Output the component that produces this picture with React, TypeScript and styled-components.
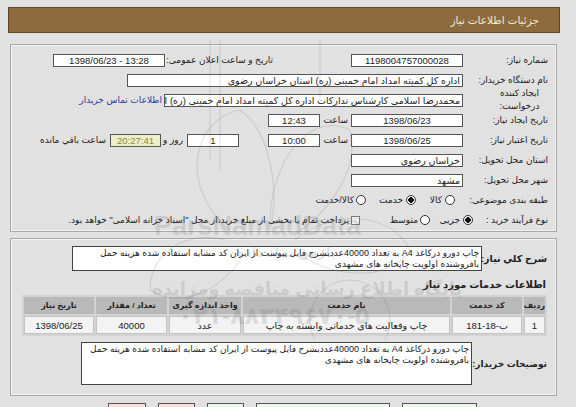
import styled, { createGlobalStyle } from "styled-components";

const GlobalStyle = createGlobalStyle`
  html, body {
    margin: 0;
    padding: 0;
    background: #e1e1e1;
  }
  body {
    font-family: "Liberation Sans", "DejaVu Sans", sans-serif;
    font-size: 9px;
    color: #222;
    overflow: hidden;
  }
`;

const Page = styled.div`
  position: relative;
  direction: rtl;
  width: 576px;
  height: 407px;
  padding: 7px 16px 0 8px;
  box-sizing: border-box;
  overflow: hidden;
`;

const TitleBar = styled.div`
  height: 26px;
  background: #8c6c3e;
  border: 1px solid #5b4628;
  box-sizing: border-box;
  display: flex;
  align-items: center;
  padding-right: 20px;
  color: #f3ead6;
  font-size: 10.5px;
`;

const Panel = styled.div<{ $mt: number; $pad: string }>`
  margin: ${(p) => p.$mt}px 3px 0 2px;
  border: 1px solid #a8a8a8;
  box-shadow: inset 0 0 0 1px #f2f2f2;
  padding: ${(p) => p.$pad};
`;

const FormRow = styled.div`
  display: flex;
  align-items: center;
  height: 20px;
  white-space: nowrap;
`;

const Label = styled.div<{ $w?: number; $stack?: boolean }>`
  flex: none;
  width: ${(p) => p.$w ?? 85}px;
  line-height: 13px;
  white-space: nowrap;
  ${(p) =>
    p.$stack &&
    "padding: 0 5px 0 33px; box-sizing: border-box; text-align: center;"}
`;

const Text = styled.span<{ $ms?: number; $w?: number }>`
  flex: none;
  margin-inline-start: ${(p) => p.$ms ?? 0}px;
  ${(p) => (p.$w ? `width: ${p.$w}px;` : "")}
  white-space: nowrap;
`;

const Field = styled.div<{
  $w: number;
  $ms?: number;
  $align?: "center" | "right";
  $warn?: boolean;
  $ltr?: boolean;
}>`
  flex: none;
  width: ${(p) => p.$w}px;
  height: 13px;
  box-sizing: border-box;
  margin-inline-start: ${(p) => p.$ms ?? 0}px;
  border: 1px solid #555;
  background: ${(p) => (p.$warn ? "#eeeec8" : "#fff")};
  color: ${(p) => (p.$warn ? "#8f8a43" : "#222")};
  direction: ${(p) => (p.$ltr ? "ltr" : "rtl")};
  text-align: ${(p) => p.$align ?? "center"};
  font-size: 9.5px;
  line-height: 11px;
  padding: 0 2px;
  overflow: hidden;
  white-space: nowrap;
`;

const BuyerLink = styled.a`
  margin-inline-start: 2px;
  color: #2c3c9c;
  text-decoration: none;
`;

const Radio = styled.span<{ $ms?: number; $on?: boolean }>`
  flex: none;
  width: 10px;
  height: 10px;
  box-sizing: border-box;
  margin-inline-start: ${(p) => p.$ms ?? 0}px;
  border-radius: 50%;
  border: 1px solid #333;
  background: ${(p) =>
    p.$on ? "radial-gradient(circle, #111 0 2.6px, #fff 3px)" : "#fff"};
`;

const Check = styled.span<{ $ms?: number }>`
  flex: none;
  width: 9px;
  height: 9px;
  box-sizing: border-box;
  margin-inline-start: ${(p) => p.$ms ?? 0}px;
  border: 1px solid #777;
  background: #f7f7f7;
`;

const DescRow = styled.div<{ $mt?: number }>`
  display: flex;
  align-items: center;
  margin-top: ${(p) => p.$mt ?? 0}px;
`;

const BoldLabel = styled.div<{ $size?: number }>`
  flex: 1;
  min-width: 0;
  font-weight: bold;
  font-size: ${(p) => p.$size ?? 9}px;
  white-space: nowrap;
`;

const DescBox = styled.div<{ $w: number; $h: number; $ml?: number }>`
  flex: none;
  width: ${(p) => p.$w}px;
  height: ${(p) => p.$h}px;
  margin-left: ${(p) => p.$ml ?? 0}px;
  box-sizing: border-box;
  background: #fff;
  border: 1px solid #444;
  padding: 1px 2px;
  line-height: 11px;
  overflow: hidden;
`;

const SectionTitle = styled.div`
  margin-top: 8px;
  padding-right: 1px;
  font-weight: bold;
  font-size: 10px;
  line-height: 12px;
`;

const Grid = styled.table`
  width: 100%;
  margin-top: 4px;
  border-collapse: separate;
  border-spacing: 2px;
  background: #d3d3d3;
  table-layout: fixed;
`;

const HeadCell = styled.th<{ $w?: number }>`
  ${(p) => (p.$w ? `width: ${p.$w}px;` : "")}
  height: 17px;
  padding: 0;
  background: #b9b9b9;
  font-weight: bold;
  font-size: 8px;
  color: #222;
  text-align: center;
  white-space: nowrap;
  overflow: hidden;
`;

const Cell = styled.td`
  height: 16px;
  padding: 0;
  background: #f3f3f3;
  border: 1px solid #c4c4c4;
  text-align: center;
  font-size: 9.5px;
  white-space: nowrap;
`;

const ButtonBar = styled.div`
  display: flex;
  gap: 12px;
  margin-top: 7px;
  padding-right: 83px;
`;

const Btn = styled.div<{ $w: number; $tone: "green" | "pink" }>`
  width: ${(p) => p.$w}px;
  height: 22px;
  box-sizing: border-box;
  border: 1px solid #555;
  background: ${(p) => (p.$tone === "pink" ? "#f7dcdc" : "#eaf6ea")};
`;

const Watermark = styled.div`
  position: absolute;
  inset: 0;
  pointer-events: none;
`;

const MarkSvg = styled.svg`
  position: absolute;
  left: 120px;
  top: 40px;
`;

const MarkWord = styled.div<{ $top: number; $left: number; $size: number }>`
  position: absolute;
  top: ${(p) => p.$top}px;
  left: ${(p) => p.$left}px;
  font-size: ${(p) => p.$size}px;
  font-weight: bold;
  color: rgba(110, 110, 110, 0.2);
  white-space: nowrap;
  direction: ltr;
`;

const descText =
  "چاپ دورو درکاغذ A4 به تعداد 40000عددبشرح فایل پیوست از ایران کد مشابه استفاده شده هزینه حمل بافروشنده اولویت چاپخانه های مشهدی";

export default function App() {
  return (
    <>
      <GlobalStyle />
      <Page>
        <TitleBar>جزئیات اطلاعات نیاز</TitleBar>

        <Panel $mt={11} $pad="5px 8px 1px 8px">
          <FormRow>
            <Label>شماره نیاز:</Label>
            <Field $w={112}>1198004757000028</Field>
            <Text $ms={78} $w={108}>
              تاریخ و ساعت اعلان عمومی:
            </Text>
            <Field $w={112} $ms={4} $ltr>
              1398/06/23 - 13:28
            </Field>
          </FormRow>
          <FormRow>
            <Label>نام دستگاه خریدار:</Label>
            <Field $w={336} $align="right">
              اداره کل کمیته امداد امام خمینی (ره) استان خراسان رضوی
            </Field>
          </FormRow>
          <FormRow>
            <Label $stack>
              ایجاد کننده
              <br />
              درخواست:
            </Label>
            <Field $w={299} $align="right">
              محمدرضا اسلامی کارشناس تدارکات اداره کل کمیته امداد امام خمینی
              (ره) استان خراسان رضوی
            </Field>
            <BuyerLink href="#">اطلاعات تماس خریدار</BuyerLink>
          </FormRow>
          <FormRow>
            <Label>تاریخ ایجاد نیاز:</Label>
            <Field $w={112}>1398/06/23</Field>
            <Text $ms={3} $w={24}>
              ساعت
            </Text>
            <Field $w={52} $ms={4}>
              12:43
            </Field>
          </FormRow>
          <FormRow>
            <Label>تاریخ اعتبار نیاز:</Label>
            <Field $w={112}>1398/06/25</Field>
            <Text $ms={3} $w={24}>
              ساعت
            </Text>
            <Field $w={52} $ms={4}>
              10:00
            </Field>
            <Field $w={52} $ms={29}>
              1
            </Field>
            <Text $ms={4} $w={18}>
              روز و
            </Text>
            <Field $w={51} $ms={4} $warn>
              20:27:41
            </Field>
            <Text $ms={4}>ساعت باقي مانده</Text>
          </FormRow>
          <FormRow>
            <Label>استان محل تحویل:</Label>
            <Field $w={112} $align="right">
              خراسان رضوی
            </Field>
          </FormRow>
          <FormRow>
            <Label>شهر محل تحویل:</Label>
            <Field $w={112} $align="right">
              مشهد
            </Field>
          </FormRow>
          <FormRow>
            <Label>طبقه بندی موضوعی:</Label>
            <Radio $ms={8} />
            <Text $ms={3} $w={13}>
              کالا
            </Text>
            <Radio $ms={13} $on />
            <Text $ms={3} $w={25}>
              خدمت
            </Text>
            <Radio $ms={12} />
            <Text $ms={2}>کالا/خدمت</Text>
          </FormRow>
          <FormRow>
            <Label $w={75}>نوع فرآیند خرید :</Label>
            <Radio $on />
            <Text $ms={3} $w={20}>
              جزیی
            </Text>
            <Radio $ms={10} />
            <Text $ms={2} $w={28}>
              متوسط
            </Text>
            <Check $ms={30} />
            <Text $ms={2}>
              پرداخت تمام یا بخشی از مبلغ خرید،از محل "اسناد خزانه اسلامی" خواهد
              بود.
            </Text>
          </FormRow>
        </Panel>

        <Panel $mt={6} $pad="7px 9px 10px 11px">
          <DescRow>
            <BoldLabel $size={9.5}>شرح کلي نياز:</BoldLabel>
            <DescBox $w={410} $h={25} $ml={50}>
              {descText}
            </DescBox>
          </DescRow>

          <SectionTitle>اطلاعات خدمات مورد نیاز</SectionTitle>

          <Grid>
            <thead>
              <tr>
                <HeadCell $w={21}>ردیف</HeadCell>
                <HeadCell $w={70}>کد خدمت</HeadCell>
                <HeadCell $w={207}>نام خدمت</HeadCell>
                <HeadCell $w={72}>واحد اندازه گیری</HeadCell>
                <HeadCell $w={71}>تعداد / مقدار</HeadCell>
                <HeadCell>تاریخ نیاز</HeadCell>
              </tr>
            </thead>
            <tbody>
              <tr>
                <Cell>1</Cell>
                <Cell>ب-18-181</Cell>
                <Cell>چاپ وفعالیت های خدماتی وابسته به چاپ</Cell>
                <Cell>عدد</Cell>
                <Cell>40000</Cell>
                <Cell>1398/06/25</Cell>
              </tr>
            </tbody>
          </Grid>

          <DescRow $mt={6}>
            <BoldLabel>توضیحات خریدار:</BoldLabel>
            <DescBox $w={391} $h={43} $ml={59}>
              {descText}
            </DescBox>
          </DescRow>
        </Panel>

        <ButtonBar>
          <Btn $w={75} $tone="green" />
          <Btn $w={134} $tone="green" />
          <Btn $w={37} $tone="green" />
          <Btn $w={37} $tone="pink" />
          <Btn $w={38} $tone="pink" />
        </ButtonBar>

        <Watermark>
          <MarkSvg width="330" height="300" viewBox="0 0 330 300">
            <g fill="none" stroke="rgba(120,120,120,0.2)" strokeWidth="1.2">
              <path d="M110 190 C 60 150, 70 80, 120 70 C 150 90, 160 150, 150 190" />
              <path d="M150 185 C 150 120, 190 70, 230 90 C 240 130, 210 170, 175 195" />
              <path d="M175 200 C 210 170, 270 170, 290 210 C 270 240, 220 240, 180 215" />
              <path d="M105 200 C 70 190, 30 210, 30 250 C 60 270, 100 250, 120 220" />
              <circle cx="230" cy="280" r="40" />
              <path d="M90 0 L 90 120 M 100 0 L 100 130 M 200 0 L 200 60" />
            </g>
          </MarkSvg>
          <MarkWord $top={211} $left={154} $size={27}>
            ParsNamadData
          </MarkWord>
          <MarkWord $top={244} $left={236} $size={14}>
            پارس نماد داده
          </MarkWord>
          <MarkWord $top={278} $left={152} $size={18}>
            پایگاه اطلاع رسانی مناقصه ومزایده
          </MarkWord>
          <MarkWord $top={302} $left={178} $size={24}>
            ۰۲۱-۸۸۳۴۹۶۷۰-۵
          </MarkWord>
        </Watermark>
      </Page>
    </>
  );
}
